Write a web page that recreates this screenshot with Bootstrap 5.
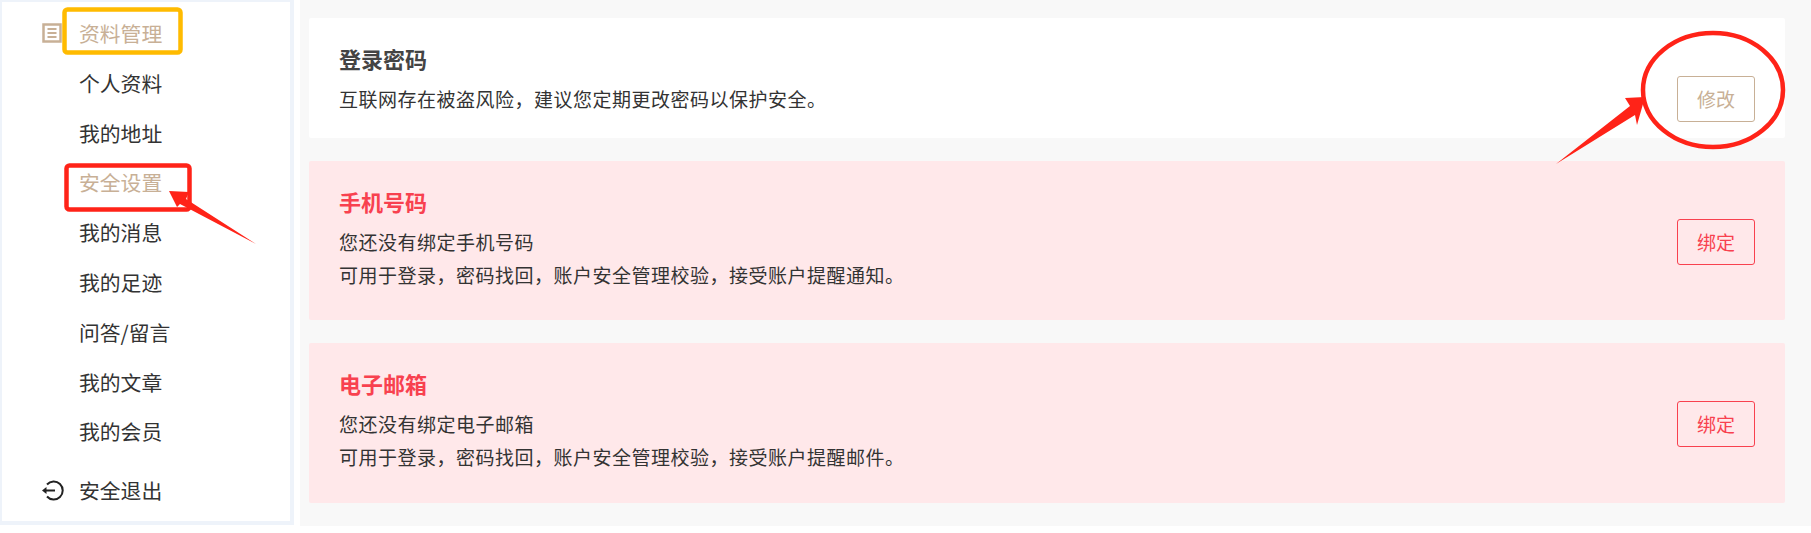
<!DOCTYPE html>
<html lang="zh-CN">
<head>
  <meta charset="UTF-8" />
  <meta name="viewport" content="width=device-width, initial-scale=1" />
  <title>安全设置</title>
  <link href="https://cdn.jsdelivr.net/npm/bootstrap@5.3.0/dist/css/bootstrap.min.css" rel="stylesheet" />
  <style>
    body { height: 533px; overflow: hidden; background: #fff; font-family: "Noto Sans CJK SC", "Liberation Sans", sans-serif; color: #333; }
    .page-wrap { height: 526px; }
    .side-box { width: 294px; height: 525px; flex: none; background: #fff; border: solid #eef3fa; border-width: 2px 4px 4px 2px; padding-top: 7px; }
    .side-item { height: 49.800px; padding-left: 77px; font-size: 20.8px; line-height: 49.800px; color: #333; text-decoration: none; display: block; position: relative; }
    .side-active { color: #c8b096; }
    .side-exit { margin-top: 8.500px; }
    .side-icon { position: absolute; left: 40px; top: 14px; }
    .main-box { flex: 1; margin-left: 6px; background: #f8f8f8; padding: 18px 26px 0 9px; }
    .sec-card { background: #fff; border-radius: 2px; height: 159.25px; padding: 26px 30px 0 30px; margin-bottom: 23px; }
    .sec-first { height: 120px; }
    .sec-warn { background: #ffe8ea; }
    .sec-title { font-size: 22px; line-height: 28px; font-weight: 700; color: #444; margin-bottom: 10px; }
    .sec-warn .sec-title { color: #f8414f; }
    .sec-text { font-size: 19px; letter-spacing: .5px; line-height: 33px; color: #333; margin: 0; }
    .sec-btn { width: 78px; height: 46px; margin-top: 32px; padding: 0; font-size: 19px; border-radius: 3px; background: transparent; border: 1px solid #c8b096; color: #c8b096; }
    .sec-warn .sec-btn { border-color: #f8414f; color: #f8414f; }
    .mark-layer { position: absolute; left: 0; top: 0; pointer-events: none; }
  </style>
</head>
<body>
  <div class="page-wrap d-flex">
    <aside class="side-box">
      <a class="side-item side-active" href="#">
        <svg class="side-icon" width="20" height="20" viewBox="0 0 20 20" fill="none" stroke="#c8b096" stroke-width="2.500"><rect x="1.500" y="1.500" width="17" height="17"/><path d="M5.500 6h9M5.500 10h9M5.500 14h9" stroke-width="1.800"/></svg>
        资料管理
      </a>
      <a class="side-item" href="#">个人资料</a>
      <a class="side-item" href="#">我的地址</a>
      <a class="side-item side-active" href="#">安全设置</a>
      <a class="side-item" href="#">我的消息</a>
      <a class="side-item" href="#">我的足迹</a>
      <a class="side-item" href="#">问答/留言</a>
      <a class="side-item" href="#">我的文章</a>
      <a class="side-item" href="#">我的会员</a>
      <a class="side-item side-exit" href="#">
        <svg class="side-icon" width="23" height="21" viewBox="0 0 23 21" fill="none" stroke="#222" stroke-width="2"><path d="M5 4.500A9 9 0 1 1 5 16.500"/><path d="M3 10.500h10"/><path d="M0 10.500l4.500-3.500v7z" fill="#222" stroke="none"/></svg>
        安全退出
      </a>
    </aside>
    <main class="main-box">
      <section class="sec-card sec-first d-flex justify-content-between align-items-start">
        <div>
          <h5 class="sec-title">登录密码</h5>
          <p class="sec-text">互联网存在被盗风险，建议您定期更改密码以保护安全。</p>
        </div>
        <button class="btn sec-btn" type="button">修改</button>
      </section>
      <section class="sec-card sec-warn d-flex justify-content-between align-items-start">
        <div>
          <h5 class="sec-title">手机号码</h5>
          <p class="sec-text">您还没有绑定手机号码</p>
          <p class="sec-text">可用于登录，密码找回，账户安全管理校验，接受账户提醒通知。</p>
        </div>
        <button class="btn sec-btn" type="button">绑定</button>
      </section>
      <section class="sec-card sec-warn d-flex justify-content-between align-items-start">
        <div>
          <h5 class="sec-title">电子邮箱</h5>
          <p class="sec-text">您还没有绑定电子邮箱</p>
          <p class="sec-text">可用于登录，密码找回，账户安全管理校验，接受账户提醒邮件。</p>
        </div>
        <button class="btn sec-btn" type="button">绑定</button>
      </section>
    </main>
  </div>

  <!-- annotations drawn on top of the screenshot -->
  <svg class="mark-layer" width="1811" height="533" fill="none">
    <rect x="64.500" y="9.500" width="116" height="43" rx="3" stroke="#ffbb00" stroke-width="4.500"/>
    <rect x="66.500" y="165.500" width="123" height="44" rx="3" stroke="#ff2318" stroke-width="4.500"/>
    <path d="M169 191L189 192L186 199L256 244L180 204L177 207Z" fill="#ff2318"/>
    <ellipse cx="1713" cy="90" rx="70" ry="57" stroke="#ff2318" stroke-width="4.500"/>
    <path d="M1645 97L1637 125L1635 115L1556 164L1630 106L1625 98Z" fill="#ff2318"/>
  </svg>
  <script src="https://cdn.jsdelivr.net/npm/bootstrap@5.3.0/dist/js/bootstrap.bundle.min.js"></script>
</body>
</html>
